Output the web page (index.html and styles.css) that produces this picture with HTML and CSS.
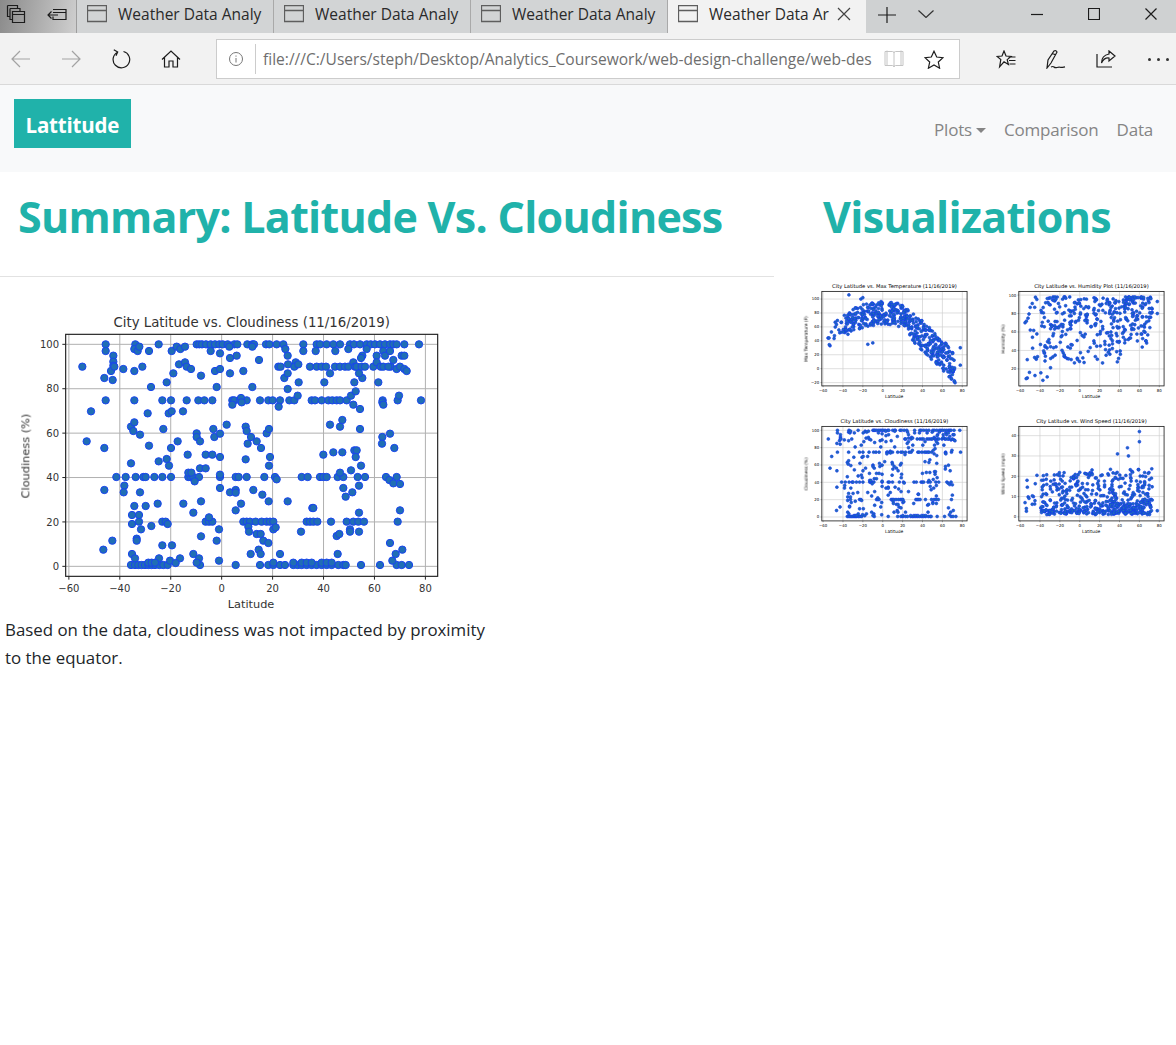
FILE: index.html
```html
<!DOCTYPE html>
<html lang="en">
<head>
  <meta charset="UTF-8">
  <title>Weather Data Analysis</title>
  <link rel="stylesheet" href="styles.css">
</head>
<body>
  <div class="tabstrip">
    <div class="tab-tools">
      <svg class="icon" width="20" height="20" viewBox="0 0 20 20"><path d="M1.500 1.500h10v3M1.500 1.500v11h2M4 4.500h10v3M4 4.500v11h2M6.500 7.500h12v11h-12zM6.500 10.500h12"/></svg>
      <svg class="icon" width="20" height="14" viewBox="0 0 20 14"><path d="M6 2.500h13v10H6v-3M6 5.500h13M11 8H1M4.500 4.500 1 8l3.500 3.500"/></svg>
    </div>
    <div class="tab">
      <svg class="tab-icon" width="20" height="18" viewBox="0 0 20 18"><path d="M.5.5h19v16H.5zM.5 5.500h19"/></svg>
      <span class="tab-title">Weather Data Analy</span>
    </div>
    <div class="tab">
      <svg class="tab-icon" width="20" height="18" viewBox="0 0 20 18"><path d="M.5.5h19v16H.5zM.5 5.500h19"/></svg>
      <span class="tab-title">Weather Data Analy</span>
    </div>
    <div class="tab">
      <svg class="tab-icon" width="20" height="18" viewBox="0 0 20 18"><path d="M.5.5h19v16H.5zM.5 5.500h19"/></svg>
      <span class="tab-title">Weather Data Analy</span>
    </div>
    <div class="tab tab-active">
      <svg class="tab-icon" width="20" height="18" viewBox="0 0 20 18"><path d="M.5.5h19v16H.5zM.5 5.500h19"/></svg>
      <span class="tab-title">Weather Data Ar</span>
      <svg class="icon tab-close" width="14" height="14" viewBox="0 0 14 14"><path d="M1 1l12 12M13 1 1 13"/></svg>
    </div>
    <svg class="icon new-tab" width="18" height="18" viewBox="0 0 18 18"><path d="M0 9h18M9 1v16"/></svg>
    <svg class="icon tab-menu" width="16" height="8" viewBox="0 0 16 8"><path d="M.5.5 8 7.500 15.500.5"/></svg>
    <div class="window-btns">
      <svg class="icon" width="12" height="12" viewBox="0 0 12 12"><path d="M0 6.500h12"/></svg>
      <svg class="icon" width="12" height="12" viewBox="0 0 12 12"><path d="M.5.5h11v11H.5z"/></svg>
      <svg class="icon" width="12" height="12" viewBox="0 0 12 12"><path d="M.5.5l11 11M11.500.5l-11 11"/></svg>
    </div>
  </div>

  <div class="toolbar">
    <div class="nav-btns">
      <svg class="icon muted" width="20" height="18" viewBox="0 0 20 18"><path d="M19 9H1M9 1 1 9l8 8"/></svg>
      <svg class="icon muted" width="20" height="18" viewBox="0 0 20 18"><path d="M1 9h18M11 1l8 8-8 8"/></svg>
      <svg class="icon" width="20" height="20" viewBox="0 0 20 20"><path d="M6.500 3.200A8.300 8.300 0 1 0 12.500 2.500M2.800 .8l3.900 2.300-1.700 3.700"/></svg>
      <svg class="icon" width="20" height="18" viewBox="0 0 20 18"><path d="M1 9.500 10 1l9 8.500M3.500 7.500v9.500h4.500v-6h4v6h4.500V7.500"/></svg>
    </div>
    <div class="address">
      <svg class="info" width="14" height="14" viewBox="0 0 14 14"><circle cx="7" cy="7" r="6.500"/><path d="M7 6v4.500M7 3.500v1.200"/></svg>
      <span class="url">file:///C:/Users/steph/Desktop/Analytics_Coursework/web-design-challenge/web-des</span>
      <svg class="book" width="20" height="18" viewBox="0 0 20 18"><path d="M1 1.500h7.500q1.500 0 1.500 1.500v14q0-1.500-1.500-1.500H1zM19 1.500h-7.500q-1.500 0-1.500 1.500M19 1.500v14h-7.500q-1.500 0-1.500 1.500M3 .5v15M17 .5v15"/></svg>
      <svg class="icon" width="20" height="19" viewBox="0 0 20 19"><path d="M10 1.200l2.700 5.800 6.300.7-4.700 4.300 1.300 6.200-5.600-3.200-5.600 3.200 1.300-6.200L1 7.700 7.300 7z"/></svg>
    </div>
    <div class="tool-btns">
      <svg class="icon" width="20" height="19" viewBox="0 0 20 19"><path d="M8 1l2 5 5 .4-3.800 3.200 1.200 4.900-4.400-2.700-4.400 5 1.200-7.200L1 6.400l5-.4zM12.500 7h7M13 10.500h6.500M13.500 14h6"/></svg>
      <svg class="icon" width="20" height="19" viewBox="0 0 20 19"><path d="M1 18 2 10 8 1q2-1 3 1L5 13zM6 3l3.500 2M5 17q2-1 3 0t3 .5 3-.2 5-.5"/></svg>
      <svg class="icon" width="20" height="18" viewBox="0 0 20 18"><path d="M1 4v13h15M13 1l6 5-6 5V8q-5-.5-7.500 5 0-7.500 7.500-9z"/></svg>
      <div class="dots"><span></span><span></span><span></span></div>
    </div>
  </div>

  <nav class="navbar">
    <a class="brand">Lattitude</a>
    <ul class="nav-links">
      <li>Plots<span class="caret"></span></li>
      <li>Comparison</li>
      <li>Data</li>
    </ul>
  </nav>

  <div class="content">
    <section class="summary">
      <h1 class="heading">Summary: Latitude Vs. Cloudiness</h1>
      <hr class="rule">
      <div id="mainPlot" class="main-plot"></div>
      <p class="note">Based on the data, cloudiness was not impacted by proximity to the equator.</p>
    </section>
    <section class="visuals">
      <h1 class="heading heading-side">Visualizations</h1>
      <div class="thumbs">
        <div id="tempThumb" class="thumb"></div>
        <div id="humidityThumb" class="thumb"></div>
        <div id="cloudThumb" class="thumb"></div>
        <div id="windThumb" class="thumb"></div>
      </div>
    </section>
  </div>

  <script src="plots.js"></script>
</body>
</html>
```

FILE: styles.css
```css
* {
  box-sizing: border-box;
}
body {
  margin: 0;
  font-family: "Open Sans", "Noto Sans", sans-serif;
  background-color: #fff;
  color: #212529;
}

/* browser chrome */
.icon {
  fill: none;
  stroke: #1c1c1c;
  stroke-width: 1.2;
  flex: none;
}
.muted {
  stroke: #a3a3a3;
}
.tabstrip {
  display: flex;
  align-items: center;
  height: 33px;
  background-color: #cfd1d2;
}
.tab-tools {
  display: flex;
  align-items: center;
  gap: 21px;
  width: 77px;
  height: 33px;
  padding: 0 0 5px 6px;
  background: linear-gradient(100deg, #8a8a8a, #cfcfcf);
  border-right: 1px solid #9d9d9d;
}
.tab {
  display: flex;
  align-items: center;
  width: 197px;
  height: 33px;
  padding: 0 0 5px 10px;
  border-right: 1px solid #a9a9a9;
  background-color: #d2d4d5;
}
.tab-active {
  width: 198px;
  border-right: none;
  background-color: #f2f2f2;
}
.tab-icon {
  flex: none;
  fill: none;
  stroke: #5e5e5e;
  stroke-width: 1.3;
}
.tab-title {
  margin-left: 11px;
  width: 146px;
  white-space: nowrap;
  font-size: 15.500px;
  color: #2a2a2a;
}
.tab-active .tab-title {
  width: 119px;
}
.tab-close {
  margin-left: 9px;
  stroke: #444;
}
.new-tab {
  margin: 0 0 3px 12px;
}
.tab-menu {
  margin: 0 0 6px 22px;
  stroke: #333;
}
.window-btns {
  display: flex;
  gap: 45px;
  margin: 0 19px 5px auto;
}
.toolbar {
  display: flex;
  align-items: flex-start;
  height: 52px;
  padding-top: 6px;
  background-color: #f2f2f2;
  border-bottom: 1px solid #d9d9d9;
}
.nav-btns {
  display: flex;
  align-items: center;
  gap: 30px;
  height: 40px;
  margin-left: 11px;
}
.address {
  display: flex;
  align-items: center;
  width: 744px;
  height: 40px;
  margin-left: 35px;
  background-color: #fff;
  border: 1px solid #ccc;
}
.info {
  flex: none;
  margin-left: 12px;
  fill: none;
  stroke: #777;
}
.url {
  width: 617px;
  margin-left: 12px;
  padding-left: 7px;
  border-left: 1px solid #ccc;
  white-space: nowrap;
  font-size: 15.550px;
  line-height: 30px;
  color: #6e6e6e;
}
.book {
  flex: none;
  margin-left: 12px;
  margin-right: 20px;
  fill: none;
  stroke: #c4c4c4;
}
.tool-btns {
  display: flex;
  align-items: center;
  gap: 30px;
  height: 40px;
  margin-left: 36px;
}
.dots {
  display: flex;
  gap: 6px;
  margin-left: 2px;
}
.dots span {
  width: 3px;
  height: 3px;
  border-radius: 50%;
  background-color: #333;
}

/* page */
.navbar {
  display: flex;
  justify-content: space-between;
  height: 87px;
  padding: 14px 23px 0 14px;
  background-color: #f8f9fa;
}
.brand {
  align-self: flex-start;
  height: 49px;
  padding: 0 11.500px;
  line-height: 52px;
  background-color: #20b2aa;
  color: #fff;
  font-size: 20.500px;
  letter-spacing: -0.2px;
  font-weight: 700;
}
.nav-links {
  display: flex;
  gap: 18px;
  margin: 17px 0 0;
  padding: 0;
  list-style: none;
  font-size: 17px;
  letter-spacing: -0.2px;
  line-height: 28px;
  color: #858585;
}
.caret {
  display: inline-block;
  margin-left: 4px;
  vertical-align: 3px;
  border-top: 5px solid #858585;
  border-left: 5px solid transparent;
  border-right: 5px solid transparent;
}
.content {
  display: flex;
  align-items: flex-start;
}
.summary {
  flex: none;
  width: 774px;
}
.visuals {
  flex: 1;
  min-width: 0;
  padding-left: 22px;
  overflow: hidden;
}
.heading {
  height: 104px;
  margin: 0;
  padding: 10px 0 0 18px;
  font-size: 43px;
  letter-spacing: -0.72px;
  line-height: 70px;
  font-weight: 700;
  color: #20b2aa;
  white-space: nowrap;
}
.heading-side {
  padding-left: 27px;
}
.rule {
  margin: 0;
  border: none;
  border-top: 1px solid #e2e2e2;
}
.main-plot {
  height: 315px;
  margin-top: 23px;
}
.main-plot svg {
  display: block;
  width: 500px;
  height: 315px;
  filter: blur(0.3px);
}
.note {
  width: 495px;
  margin: 1px 0 0;
  padding-left: 5px;
  font-size: 16.850px;
  line-height: 27.500px;
}
.thumbs {
  display: grid;
  grid-template-columns: 195.600px 195.600px;
  column-gap: 1.700px;
  row-gap: 12px;
  margin-top: 2px;
}
.thumb svg {
  display: block;
  width: 195.600px;
  height: 123px;
  filter: blur(0.35px);
}

/* plot parts */
.plot-grid {
  stroke: #b0b0b0;
  stroke-width: 3;
}
.plot-frame {
  fill: none;
  stroke: #222;
  stroke-width: 3.500;
}
.plot-tick {
  stroke: #222;
  stroke-width: 3;
}
.plot-dot {
  fill: #1f6eb5;
  stroke: #1a44f0;
  stroke-width: 3;
}
.plot-text {
  font-family: "DejaVu Sans", sans-serif;
  fill: #333;
}
.thumb .plot-grid {
  stroke-width: 5;
  stroke: #cdcdcd;
}
.thumb .plot-frame {
  stroke-width: 6.500;
  stroke: #222;
}
.thumb .plot-dot {
  stroke-width: 5;
  stroke: #1438f0;
}
.thumb .plot-text {
  fill: #000;
}
```

FILE: plots.js
```js
// plot box in drawing units: the svg viewBox is 1500 x 945
var BOX = { left: 197, right: 1313, top: 103, bottom: 829 };
var LAT_TICKS = [-60, -40, -20, 0, 20, 40, 60, 80];

function latX(lat) {
  return 665 + lat * 7.64;
}

// cloudiness points, already in drawing units
var cloudPoints = [];
function addRow(y, xs) {
  xs.forEach(function(x) { cloudPoints.push([x, y]); });
}
addRow(133, [317,406,476,590,598,606,618,632,645,658,668,683,703,712,742,757,762,798,808,830,850,910,950,960,980,1000,1020,1050,1062,1080,1100,1112,1125,1140,1155,1170,1180,1190,1213,1257]);
addRow(301, [317,403,487,513,560,595,613,637,697,703,720,740,780,805,818,840,868,883,935,945,965,985,997,1010,1020,1040,1148,1193,1263]);
addRow(531, [349,377,407,430,437,463,487,513,565,572,580,597,660,707,716,740,793,825,905,923,960,970,980,1013,1030,1073,1095,1158,1190]);
addRow(665, [417,487,497,617,627,637,730,740,750,767,785,800,810,820,920,930,940,952,993,1040,1060,1075,1092,1193]);
addRow(795, [393,405,415,425,435,445,455,465,478,490,503,600,707,780,805,820,840,855,880,893,905,920,935,950,965,980,995,1015,1030,1037,1083,1140,1190,1205,1227]);
cloudPoints = cloudPoints.concat([
  [317,153],[340,167],[340,185],[340,197],[333,213],[313,234],[338,240],[247,200],[343,200],[370,207],[403,147],[413,153],[418,140],[403,213],[427,200],[447,153],[453,261],[500,247],[515,153],[520,220],[530,140],[541,147],[555,140],[537,193],[555,187],[560,200],[573,207],[603,227],[632,153],[645,213],[650,261],[660,207],[660,160],[688,140],[690,174],[690,220],[710,167],[730,213],[757,140],[757,261],[777,180],[856,147],[863,167],[835,200],[842,200],[864,193],[887,187],[883,200],[895,193],[853,234],[863,220],[863,267],[896,247],[910,153],[930,200],[947,153],[950,200],[965,200],[978,200],[973,247],[990,220],[1006,153],[1005,200],[1020,200],[1035,200],[1045,200],[1060,187],[1065,200],[1045,147],[1063,247],[1070,200],[1087,167],[1083,174],[1085,200],[1095,200],[1087,234],[1077,220],[1100,147],[1120,200],[1130,167],[1130,187],[1142,200],[1135,247],[1150,153],[1155,167],[1170,153],[1172,200],[1150,200],[1165,200],[1180,180],[1190,207],[1200,200],[1205,167],[1213,167],[1213,207],[1220,213],
  [273,334],[697,314],[723,294],[725,307],[836,320],[893,287],[1060,314],[1080,327],[1053,287],[1067,274],[1147,307],[1150,314],[1197,287],[443,340],[506,340],[515,334],[549,334],
  [260,424],[313,444],[393,380],[403,367],[400,393],[420,404],[447,437],[490,387],[513,444],[533,424],[590,400],[590,411],[600,424],[640,387],[643,411],[660,401],[680,374],[737,380],[740,393],[743,431],[753,411],[770,424],[783,444],[800,400],[807,387],[990,374],[1020,380],[1027,360],[1080,387],[1147,411],[1146,431],[1170,401],[1183,444],
  [393,490],[476,484],[500,477],[507,497],[563,464],[617,464],[637,464],[660,471],[737,478],[810,471],[807,497],[970,464],[1000,457],[1027,457],[1063,451],[1070,451],[1067,471],[1083,497],
  [373,557],[371,577],[313,570],[420,577],[565,518],[574,518],[584,544],[600,505],[617,505],[660,524],[660,564],[690,577],[707,570],[707,578],[760,570],[787,584],[830,538],[1020,518],[1030,564],[1037,590],[1053,511],[1057,577],[1077,557],[1168,540],[1180,550],[1200,552],
  [403,618],[437,618],[473,611],[550,611],[603,604],[723,611],[806,604],[863,604],[937,624],[940,624],[1200,631],
  [396,645],[417,645],[396,672],[423,688],[454,678],[503,672],[627,652],[580,638],[707,631],[1077,638],[657,688],[745,680],[747,695],[770,702],[782,702],[790,722],[805,729],[820,688],[827,682],[903,695],[1010,708],[1018,702],[1050,688],[1050,695],[1077,695],[410,716],[410,722],[337,722],[310,749],[487,736],[516,736],[603,709],[650,722],[776,749],[782,762],[752,762],[840,762],[1013,762],[1170,729],[1207,749],[1187,762],[1177,782],
  [396,762],[405,775],[477,775],[510,782],[540,775],[580,762],[597,775],[590,788],[657,782],[445,788],[455,788],[465,788],[527,789],[820,788],[880,788],[905,788],[920,788],[935,788],[965,788],[980,788],[995,788]
]);

// small seeded generator so the thumbnails stay the same on every load
var seed = 4217;
function rnd() {
  seed = (seed * 16807) % 2147483647;
  return seed / 2147483647;
}
function randomLat() {
  var r = rnd();
  if (r < 0.55) return 15 + rnd() * 58;
  if (r < 0.97) return -40 + rnd() * 55;
  return -55 + rnd() * 15;
}
function interp(table, x) {
  for (var i = 1; i < table.length; i++) {
    if (x <= table[i][0]) {
      var a = table[i - 1], b = table[i];
      return a[1] + (b[1] - a[1]) * (x - a[0]) / (b[0] - a[0]);
    }
  }
  return table[table.length - 1][1];
}

var tempCurve = [[-60,40],[-35,65],[-20,76],[0,80],[20,76],[40,46],[60,20],[75,-2],[90,-5]];

function tempPoints(yOf) {
  var pts = [[-55,44],[-54,44],[-34,106],[-22,100],[-20,102],[-15,35],[-10,37],[78,30],[78,5]];
  var out = pts.map(function(p) { return [latX(p[0]), yOf(p[1])]; });
  for (var i = 0; i < 480; i++) {
    var lat = randomLat();
    var t = interp(tempCurve, lat) + (rnd() - 0.5) * (lat > 30 ? 44 : 34);
    out.push([latX(lat), yOf(t)]);
  }
  return out;
}
function humidityPoints(yOf) {
  var out = [[latX(-55), yOf(70)],[latX(-52), yOf(75)],[latX(78), yOf(80)],[latX(78), yOf(93)]];
  for (var i = 0; i < 390; i++) {
    var lat = randomLat();
    var h = 98 - Math.pow(rnd(), 1.4) * 72;
    if (lat > 42) h = Math.max(h, 42 + rnd() * 55);
    if (lat < -25 && rnd() < 0.15) h = 6 + rnd() * 20;
    out.push([latX(lat), yOf(h)]);
  }
  return out;
}
function windPoints(yOf) {
  var out = [[latX(60), yOf(42)],[latX(60), yOf(37)],[latX(48), yOf(34)],[latX(38), yOf(31)],[latX(49), yOf(30)],[latX(-55), yOf(7)],[latX(-53), yOf(18)],[latX(78), yOf(3)]];
  for (var i = 0; i < 520; i++) {
    var lat = randomLat();
    out.push([latX(lat), yOf(1 + Math.pow(rnd(), 2.2) * 21 + rnd() * 2)]);
  }
  return out;
}

function el(parent, name, attrs, text) {
  var node = document.createElementNS("http://www.w3.org/2000/svg", name);
  for (var key in attrs) node.setAttribute(key, attrs[key]);
  if (text) node.textContent = text;
  parent.appendChild(node);
  return node;
}

function drawPlot(id, opts) {
  var svg = el(document.getElementById(id), "svg", { viewBox: "0 0 1500 945" });

  el(svg, "rect", { x: 0, y: 0, width: 1500, height: 945, fill: "#fff" });
  LAT_TICKS.forEach(function(lat) {
    var x = latX(lat);
    el(svg, "line", { x1: x, x2: x, y1: BOX.top, y2: BOX.bottom, "class": "plot-grid" });
    el(svg, "line", { x1: x, x2: x, y1: BOX.bottom, y2: BOX.bottom + 10, "class": "plot-tick" });
    el(svg, "text", { x: x, y: 876, "font-size": 30, "text-anchor": "middle", "class": "plot-text" },
      String(lat).replace("-", "\u2212"));
  });
  opts.yTicks.forEach(function(v) {
    var y = opts.yOf(v);
    el(svg, "line", { x1: BOX.left, x2: BOX.right, y1: y, y2: y, "class": "plot-grid" });
    el(svg, "line", { x1: BOX.left - 10, x2: BOX.left, y1: y, y2: y, "class": "plot-tick" });
    el(svg, "text", { x: 177, y: y + 11, "font-size": 30, "text-anchor": "end", "class": "plot-text" },
      String(v).replace("-", "\u2212"));
  });

  opts.points.forEach(function(p) {
    el(svg, "circle", { cx: p[0], cy: p[1], r: 11, "class": "plot-dot" });
  });

  el(svg, "rect", { x: BOX.left, y: BOX.top, width: BOX.right - BOX.left, height: BOX.bottom - BOX.top, "class": "plot-frame" });
  el(svg, "text", { x: 755, y: 80, "font-size": 40, "text-anchor": "middle", "class": "plot-text" }, opts.title);
  el(svg, "text", { x: 753, y: 923, "font-size": 34, "text-anchor": "middle", "class": "plot-text" }, "Latitude");
  el(svg, "text", { x: 0, y: 0, "font-size": 34, "text-anchor": "middle", "class": "plot-text",
    transform: "translate(88 468) rotate(-90)" }, opts.yLabel);
}

// y scale from two known tick positions, given as a share of the box height
function scale(v1, f1, v2, f2) {
  var h = BOX.bottom - BOX.top;
  return function(v) {
    return BOX.top + h * (f1 + (f2 - f1) * (v - v1) / (v2 - v1));
  };
}

var cloudY = scale(100, 0.0413, 0, 0.9587);
var tempY = scale(100, 0.081, -20, 0.965);
var humidityY = scale(100, 0.039, 20, 0.82);
var windY = scale(0, 0.957, 40, 0.098);
var cloudTicks = [0, 20, 40, 60, 80, 100];

drawPlot("mainPlot", { title: "City Latitude vs. Cloudiness (11/16/2019)", yLabel: "Cloudiness (%)", yTicks: cloudTicks, yOf: cloudY, points: cloudPoints });
drawPlot("cloudThumb", { title: "City Latitude vs. Cloudiness (11/16/2019)", yLabel: "Cloudiness (%)", yTicks: cloudTicks, yOf: cloudY, points: cloudPoints });
drawPlot("tempThumb", { title: "City Latitude vs. Max Temperature (11/16/2019)", yLabel: "Max Temperature (F)", yTicks: [-20, 0, 20, 40, 60, 80, 100], yOf: tempY, points: tempPoints(tempY) });
drawPlot("humidityThumb", { title: "City Latitude vs. Humidity Plot (11/16/2019)", yLabel: "Humidity (%)", yTicks: [20, 40, 60, 80, 100], yOf: humidityY, points: humidityPoints(humidityY) });
drawPlot("windThumb", { title: "City Latitude vs. Wind Speed (11/16/2019)", yLabel: "Wind Speed (mph)", yTicks: [0, 10, 20, 30, 40], yOf: windY, points: windPoints(windY) });
```
